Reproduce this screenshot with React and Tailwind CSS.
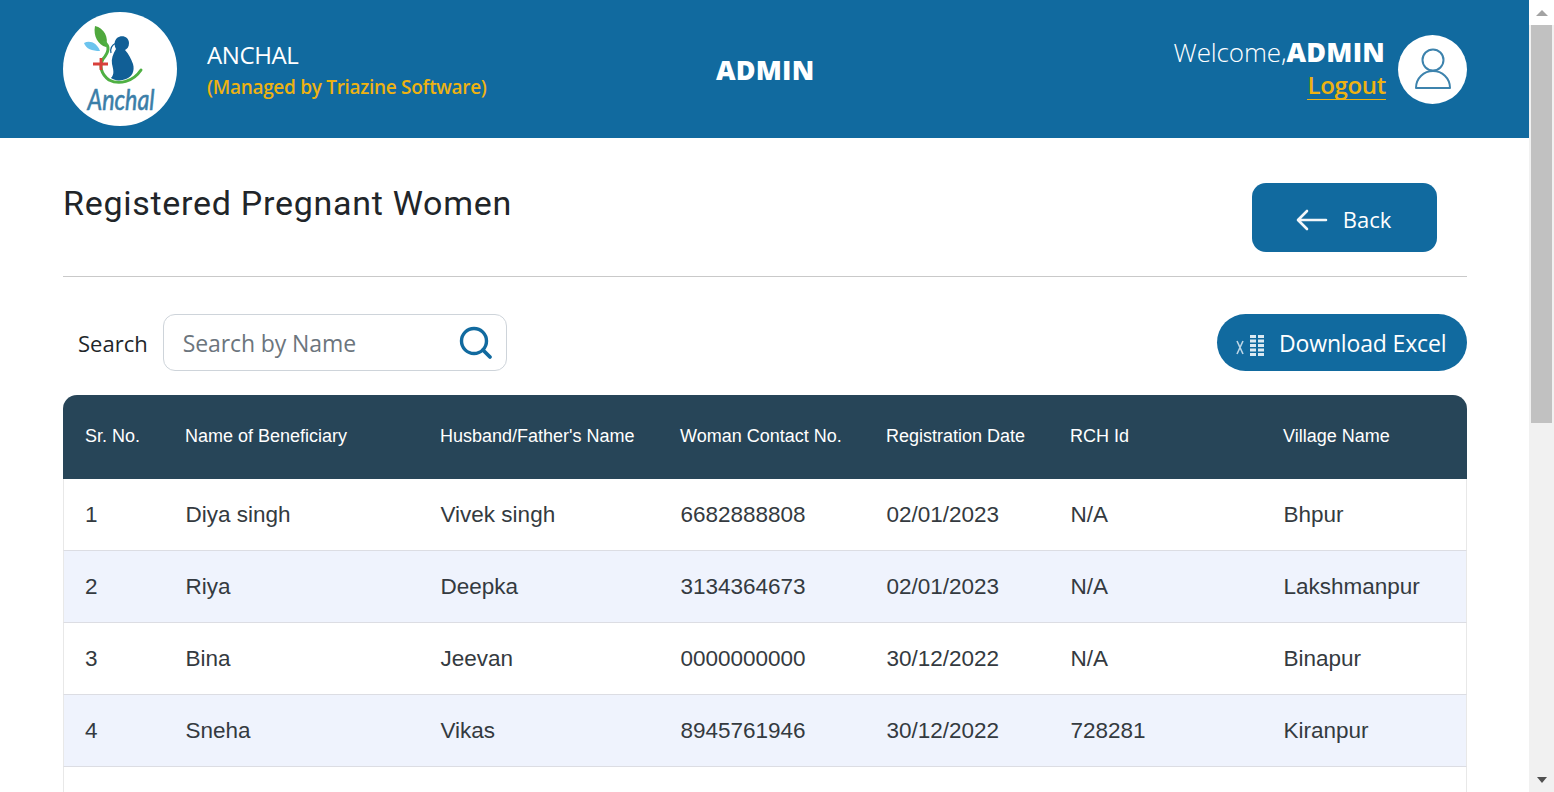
import React from 'react';

const rows = [
    ['1', 'Diya singh', 'Vivek singh', '6682888808', '02/01/2023', 'N/A', 'Bhpur'],
    ['2', 'Riya', 'Deepka', '3134364673', '02/01/2023', 'N/A', 'Lakshmanpur'],
    ['3', 'Bina', 'Jeevan', '0000000000', '30/12/2022', 'N/A', 'Binapur'],
    ['4', 'Sneha', 'Vikas', '8945761946', '30/12/2022', '728281', 'Kiranpur'],
    ['', '', '', '', '', '', ''],
];

const columns = [
    {label: 'Sr. No.', width: 'w-[100px]'},
    {label: 'Name of Beneficiary', width: 'w-[255px]'},
    {label: "Husband/Father's Name", width: 'w-[240px]'},
    {label: 'Woman Contact No.', width: 'w-[206px]'},
    {label: 'Registration Date', width: 'w-[184px]'},
    {label: 'RCH Id', width: 'w-[213px]'},
    {label: 'Village Name', width: 'w-[206px]'},
];

const Logo = () => (
    <svg viewBox="0 0 114 114" className="size-[114px] shrink-0 rounded-full bg-white">
        {/* leaves */}
        <path d="M32 14 C41 16 46 25 43 35 C35 33 30 24 32 14Z" fill="#4fa83d" />
        <path d="M21 31 C27 28 34 31 37 39 C29 39 23 37 21 31Z" fill="#6cc4ee" />
        {/* stem and arc */}
        <path d="M41 30 C47 34 46 40 40 47 C36 54 38 62 46 68 C56 73 70 70 78 58" fill="none" stroke="#4fb043" strokeWidth="3" strokeLinecap="round" />
        {/* cross */}
        <path d="M38 46 V58 M30 52 H45" stroke="#d8403a" strokeWidth="2.8" />
        {/* mother */}
        <path d="M54 26 C59 22 66 25 66 31 C66 35 64 37 62 38 C66 42 68 47 70 52 C72 59 69 65 63 67 C58 69 52 69 48 66 C52 62 50 57 49 52 C48 47 50 42 53 37 C51 33 51 29 54 26Z" fill="#115f96" />
        <path d="M53 31 C49 33 47 37 48 41" fill="none" stroke="#115f96" strokeWidth="1.2" />
        <text x="58" y="98" textAnchor="middle" textLength="67" lengthAdjust="spacingAndGlyphs" fontFamily="'Lato', sans-serif" fontStyle="italic" fontSize="29" fill="#3a7ea8" stroke="#3a7ea8" strokeWidth="0.6">Anchal</text>
    </svg>
);

const UserIcon = () => (
    <svg viewBox="0 0 69 69" className="size-[69px] shrink-0 rounded-full bg-white" fill="none" stroke="#3d83ad" strokeWidth="2">
        <circle cx="35" cy="25" r="10.5" />
        <path d="M18 53 C18 43 26 36 35 36 C44 36 52 43 52 53 Z" strokeLinejoin="round" />
    </svg>
);

const ExcelIcon = () => (
    <svg viewBox="0 0 28 22" className="h-[22px] w-[28px]" fill="#dbe9f2">
        <path d="M1 7l6 13M7 7L1 20" stroke="#bcd6e6" strokeWidth="1.6" fill="none" />
        <path d="M14 1h6v3h-6zM22 1h6v3h-6zM14 5.500h6v3h-6zM22 5.500h6v3h-6zM14 10h6v3h-6zM22 10h6v3h-6zM14 14.500h6v3h-6zM22 14.500h6v3h-6zM14 19h6v3h-6zM22 19h6v3h-6z" />
    </svg>
);

export default function App() {
    return (
        <div className="flex h-[792px] w-full overflow-hidden bg-white font-['Open_Sans',sans-serif]">
            <div className="w-[1529px] shrink-0">
                <header className="flex h-[138px] items-center bg-[#116a9f] pr-[62px] pl-[63px]">
                    <div className="flex w-[653px] items-center">
                        <Logo />
                        <div className="ml-[30px] text-white">
                            <div className="pt-[1px] text-[24px] leading-[32px] tracking-[-0.4px]">ANCHAL</div>
                            <div className="pt-[2px] text-[19px] leading-[28px] font-semibold tracking-[-0.3px] text-[#eeb211]">(Managed by Triazine Software)</div>
                        </div>
                    </div>
                    <div className="pt-[2px] text-[27px] font-black tracking-[0.2px] text-white">ADMIN</div>
                    <div className="ml-auto flex items-center gap-[12px]">
                        <div className="flex flex-col items-end pb-[2px]">
                            <div className="pr-[1px] pb-[3px] text-[26px] leading-[32px] font-light tracking-[-0.1px] text-white">
                                Welcome,<span className="text-[27px] font-black tracking-[0.2px]">ADMIN</span>
                            </div>
                            <a className="border-b border-[#eeb211] text-[24px] leading-[28px] font-semibold tracking-[-0.3px] text-[#eeb211]">Logout</a>
                        </div>
                        <UserIcon />
                    </div>
                </header>

                <main className="pr-[62px] pl-[63px]">
                    <div className="flex h-[139px] items-start justify-between border-b border-[#c9c9c9] pt-[44px]">
                        <h1 className="font-['Roboto',sans-serif] text-[34px] leading-[42px] tracking-[0.72px] text-[#212529]">Registered Pregnant Women</h1>
                        <button className="mt-[1px] mr-[30px] flex h-[69px] w-[185px] items-center justify-center gap-[15px] rounded-[14px] bg-[#116a9f] pt-[3px] pr-[2px] text-[22px] text-white">
                            <svg viewBox="0 0 32 22" className="mt-[2px] h-[22px] w-[32px]" fill="none" stroke="#f2f7fa" strokeWidth="2.6" strokeLinecap="round" strokeLinejoin="round">
                                <path d="M30 11H3M11 2L2 11l9 9" />
                            </svg>
                            Back
                        </button>
                    </div>

                    <div className="mt-[37px] flex items-center justify-between">
                        <div className="flex items-center pl-[15px]">
                            <label className="pt-[2px] text-[22px] text-[#212529]">Search</label>
                            <div className="ml-[15px] flex h-[57px] w-[344px] items-center justify-between rounded-[12px] border border-[#ced4da] pr-[13px] pl-[19px]">
                                <span className="pt-[2px] text-[23px] tracking-[-0.1px] text-[#6c757d]">Search by Name</span>
                                <svg viewBox="0 0 34 34" className="size-[34px]" fill="none" stroke="#116a9f" strokeLinecap="round">
                                    <circle cx="15" cy="15" r="12.5" strokeWidth="3.4" />
                                    <path d="M24 24l7 7" strokeWidth="3.8" />
                                </svg>
                            </div>
                        </div>
                        <button className="flex h-[57px] w-[250px] items-center gap-[15px] rounded-full bg-[#116a9f] pl-[19px] text-white">
                            <span className="pt-[4px]"><ExcelIcon /></span>
                            <span className="pt-[2px] text-[23px] tracking-[-0.15px]">Download Excel</span>
                        </button>
                    </div>

                    <table className="mt-[24px] w-[1404px] table-fixed border-separate border-spacing-0 font-['Liberation_Sans',sans-serif]">
                        <thead>
                            <tr className="h-[84px] text-left text-[18px] text-white">
                                {columns.map((col, i) => (
                                    <th
                                        key={col.label}
                                        className={`${col.width} bg-[#274558] pr-2 pb-[2px] pl-[22px] font-normal ${i === 0 ? 'rounded-tl-[14px]' : ''} ${i === 6 ? 'rounded-tr-[14px]' : ''}`}
                                    >
                                        {col.label}
                                    </th>
                                ))}
                            </tr>
                        </thead>
                        <tbody>
                            {rows.map((row, r) => (
                                <tr key={r} className={`h-[72px] text-[22.500px] text-[#343a40] ${r % 2 === 1 ? 'bg-[#eff3fd]' : 'bg-white'}`}>
                                    {row.map((cell, c) => (
                                        <td
                                            key={c}
                                            className={`border-b border-[#dcdde3] ${c === 0 ? 'border-l border-l-[#e8e8e8] pl-[21px]' : 'pl-[22.500px]'} ${c === 6 ? 'border-r border-r-[#e8e8e8]' : ''}`}
                                        >
                                            {cell}
                                        </td>
                                    ))}
                                </tr>
                            ))}
                        </tbody>
                    </table>
                </main>
            </div>

            {/* scrollbar */}
            <div className="flex w-[25px] shrink-0 flex-col items-center bg-[#f1f1f1]">
                <div className="flex h-[25px] w-full items-center justify-center bg-white">
                    <div className="size-0 border-x-[6px] border-b-[6px] border-x-transparent border-b-[#a3a3a3]" />
                </div>
                <div className="h-[398px] w-[21px] bg-[#c1c1c1]" />
                <div className="mt-auto flex h-[25px] w-full items-center justify-center">
                    <div className="size-0 border-x-[5px] border-t-[6px] border-x-transparent border-t-[#505050]" />
                </div>
            </div>
        </div>
    );
}
